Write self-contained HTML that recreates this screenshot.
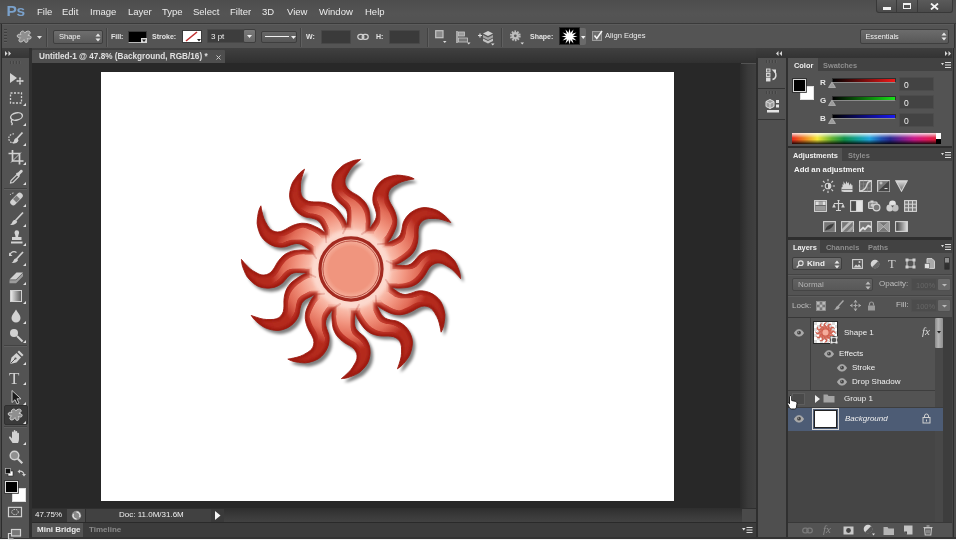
<!DOCTYPE html>
<html><head><meta charset="utf-8"><title>Ps</title>
<style>
*{box-sizing:border-box;margin:0;padding:0}
html,body{width:956px;height:540px;overflow:hidden;background:#535353;font-family:"Liberation Sans","DejaVu Sans",sans-serif;font-size:9px;color:#e6e6e6}
.a{position:absolute}
#root{position:absolute;left:0;top:0;width:956px;height:540px;overflow:hidden;background:#535353;filter:blur(.35px)}
.t{position:absolute;white-space:nowrap;line-height:1}
/* menubar */
#menubar{left:0;top:0;width:956px;height:23.500px;background:linear-gradient(#4d4d4d,#545454 60%,#525252);border-bottom:1px solid #3a3a3a}
#menubar .t{top:7px;font-size:9.500px;color:#ececec}
/* options */
#opts{left:0;top:23.500px;width:956px;height:25px;background:#545454;border-top:1px solid #5c5c5c;border-bottom:1px solid #3c3c3c}
.inp{position:absolute;background:#3a3a3a;border:1px solid #484848;border-radius:1px}
.dd{position:absolute;background:linear-gradient(#6e6e6e,#5a5a5a);border:1px solid #3e3e3e;border-radius:2px}
.sep{position:absolute;width:1px;background:#434343;border-right:1px solid #606060;box-sizing:content-box}
/* tabbar */
#tabbar{left:0;top:48px;width:956px;height:15px;background:linear-gradient(#404040,#303030)}
#doctab{left:32px;top:50px;width:193px;height:13px;background:#4e4e4e;border-radius:1px 1px 0 0}
/* canvas */
#work{left:32px;top:63px;width:709px;height:445px;background:#282828}
#paper{left:100.800px;top:71.700px;width:573.400px;height:429.700px;background:#fff;box-shadow:0 0 1px #222}
/* tools */
#tools{left:2px;top:58px;width:27px;height:480px;background:#535353}
/* right */
.panel{position:absolute;left:788px;width:164px;background:#535353}
.tabrow{position:absolute;left:788px;width:164px;height:13px;background:#424242}
.tab{position:absolute;top:0;height:13px;background:#535353}
.tabrow .t{top:3.600px;font-size:7.400px}
</style></head><body><div id="root">

<div id="menubar" class="a">
<span class="t" style="left:6.500px;top:3px;font-size:15.500px;font-weight:bold;color:#7aa1cb;letter-spacing:-.3px">Ps</span>
<span class="t" style="left:37px">File</span>
<span class="t" style="left:62px">Edit</span>
<span class="t" style="left:90px">Image</span>
<span class="t" style="left:128px">Layer</span>
<span class="t" style="left:162px">Type</span>
<span class="t" style="left:193px">Select</span>
<span class="t" style="left:230px">Filter</span>
<span class="t" style="left:262px">3D</span>
<span class="t" style="left:287px">View</span>
<span class="t" style="left:319px">Window</span>
<span class="t" style="left:365px">Help</span>
<div class="a" style="left:876px;top:0;width:77px;height:13px;background:linear-gradient(#5a5a5a,#4a4a4a);border:1px solid #383838;border-top:none;border-radius:0 0 3px 3px"></div>
<div class="a" style="left:896px;top:0;width:1px;height:12px;background:#3a3a3a"></div>
<div class="a" style="left:917px;top:0;width:1px;height:12px;background:#3a3a3a"></div>
<div class="a" style="left:883px;top:7px;width:8px;height:2.500px;background:#f2f2f2"></div>
<div class="a" style="left:903px;top:3px;width:8px;height:6px;border:1.500px solid #f2f2f2;border-top-width:2px"></div>
<svg class="a" style="left:930px;top:3px" width="9" height="7" viewBox="0 0 9 7"><path d="M1 .5l7 6M8 .5l-7 6" stroke="#f2f2f2" stroke-width="1.800"/></svg>
</div>

<div id="opts" class="a">
<div class="a" style="left:4px;top:4px;width:3px;height:15px;background:repeating-linear-gradient(#3e3e3e 0 1px,#5e5e5e 1px 2px,transparent 2px 3px)"></div>
<svg class="a" style="left:16px;top:4px" width="18" height="17" viewBox="0 0 18 17"><path d="M5.5 2.5c1.5-1 3 .2 3.400 1.300c1.200-1.600 3.600-2.200 4.800-1.100c1.300 1.300-.3 3-1.800 3.600c1.600.2 3.400.8 3.200 2.500c-.3 1.700-2.500 1.400-3.800.7c.8 1.400 1.100 3.300-.5 3.800c-1.700.5-2.600-1.300-2.800-2.700c-.9 1.500-2.600 3-4.300 2.200c-1.700-1 -.4-3 .8-4c-1.500.1-3.300-.3-3.300-1.900c.1-1.700 2.200-1.900 3.700-1.400c-.7-.9-.6-2.300.6-3z" fill="#8f8f8f" stroke="#c9c9c9" stroke-width="1"/></svg>
<svg class="a" style="left:37px;top:11px" width="6" height="4"><path d="M0 0h5l-2.500 3z" fill="#ddd"/></svg>
<div class="sep" style="left:46px;top:3px;height:19px"></div>
<div class="dd" style="left:53px;top:5px;width:50px;height:14px"><span class="t" style="left:5px;top:2.500px;font-size:7.500px;color:#f0f0f0">Shape</span>
<svg class="a" style="left:41px;top:2px" width="6" height="9"><path d="M0.500 3.500l2.500-3l2.500 3zM0.500 5.500l2.500 3l2.500-3z" fill="#e8e8e8"/></svg></div>
<div class="sep" style="left:106px;top:3px;height:19px"></div>
<span class="t" style="left:111px;top:8px;font-size:7px;font-weight:bold;color:#e4e4e4">Fill:</span>
<div class="a" style="left:128px;top:6px;width:19px;height:12px;background:#000;border:1px solid #3a3a3a;border-bottom-color:#bbb"></div>
<svg class="a" style="left:141px;top:13px" width="6" height="5"><rect width="6" height="5" fill="#d8d8d8"/><path d="M1 1.500h4l-2 2.500z" fill="#222"/></svg>
<span class="t" style="left:152px;top:8px;font-size:7px;font-weight:bold;color:#e4e4e4">Stroke:</span>
<svg class="a" style="left:182px;top:5px" width="20" height="13" viewBox="0 0 20 13"><rect x=".5" y=".5" width="19" height="12" fill="#fff" stroke="#3a3a3a"/><path d="M4 11L15 2" stroke="#c03030" stroke-width="1.600"/><path d="M15 9h4l-2 2.500z" fill="#222"/></svg>
<div class="inp" style="left:207px;top:4.500px;width:37px;height:14px;background:#3d3d3d"><span class="t" style="left:3px;top:2.500px;font-size:8px;color:#f0f0f0">3 pt</span></div>
<div class="dd" style="left:243px;top:4.500px;width:13px;height:14px;background:linear-gradient(#7a7a7a,#666)"><svg class="a" style="left:3px;top:5px" width="6" height="4"><path d="M0 0h5l-2.500 3z" fill="#eee"/></svg></div>
<div class="dd" style="left:261px;top:6px;width:36px;height:12px;background:linear-gradient(#686868,#565656)"><div class="a" style="left:3px;top:4px;width:24px;height:1.500px;background:#f2f2f2"></div><svg class="a" style="left:29px;top:4px" width="5" height="4"><path d="M0 0h5l-2.500 3z" fill="#eee"/></svg></div>
<div class="sep" style="left:300px;top:3px;height:19px"></div>
<span class="t" style="left:306px;top:8px;font-size:7px;font-weight:bold;color:#e4e4e4">W:</span>
<div class="inp" style="left:321px;top:5px;width:30px;height:14px"></div>
<svg class="a" style="left:357px;top:8px" width="12" height="8" viewBox="0 0 12 8"><rect x=".8" y="1.300" width="6" height="5" rx="2.500" fill="none" stroke="#cfcfcf" stroke-width="1.300"/><rect x="5.200" y="1.300" width="6" height="5" rx="2.500" fill="none" stroke="#cfcfcf" stroke-width="1.300"/></svg>
<span class="t" style="left:376px;top:8px;font-size:7px;font-weight:bold;color:#e4e4e4">H:</span>
<div class="inp" style="left:389px;top:5px;width:31px;height:14px"></div>
<div class="sep" style="left:427px;top:3px;height:19px"></div>
<svg class="a" style="left:434.500px;top:5.500px" width="12" height="14" viewBox="0 0 12 14"><rect x=".7" y=".7" width="7.300" height="7" fill="#8a8a8a" stroke="#c4c4c4" stroke-width="1.200"/><path d="M8 11h3.500l-1.750 2z" fill="#ddd"/></svg>
<svg class="a" style="left:456px;top:6px" width="15" height="14" viewBox="0 0 15 14"><path d="M1 0v12" stroke="#ccc" stroke-width="1.400"/><rect x="2.500" y="1" width="6" height="4" fill="#9a9a9a" stroke="#c8c8c8" stroke-width=".8"/><rect x="2.500" y="7" width="9" height="4" fill="#777" stroke="#c8c8c8" stroke-width=".8"/><path d="M11 11.500h3.500l-1.750 2z" fill="#ddd"/></svg>
<svg class="a" style="left:477px;top:5px" width="18" height="16" viewBox="0 0 18 16"><path d="M1 5.500h4M3 3.500v4" stroke="#ddd" stroke-width="1.200"/><path d="M11 1l5 2.500l-5 2.500l-5-2.500z" fill="#d0d0d0"/><path d="M6 5l5 2.500l5-2.500v2.500l-5 2.500l-5-2.500z" fill="#a4a4a4"/><path d="M6 8.500l5 2.500l5-2.500v2.500l-5 2.500l-5-2.500z" fill="#c0c0c0"/><path d="M14 13.500h3.500l-1.750 2z" fill="#ddd"/></svg>
<div class="sep" style="left:501px;top:3px;height:19px"></div>
<svg class="a" style="left:509px;top:4.200px" width="16" height="17" viewBox="0 0 16 17"><circle cx="6.300" cy="6.800" r="4.300" fill="none" stroke="#bdbdbd" stroke-width="2.200" stroke-dasharray="1.600 1.100"/><circle cx="6.300" cy="6.800" r="3.700" fill="#bdbdbd"/><circle cx="6.300" cy="6.800" r="1.400" fill="#5a5a5a"/><path d="M11.500 13.500h3.500l-1.750 2z" fill="#ddd"/></svg>
<span class="t" style="left:530px;top:8px;font-size:7px;font-weight:bold;color:#e4e4e4">Shape:</span>
<div class="a" style="left:559px;top:2.500px;width:21px;height:18px;background:#000;border:1px solid #2a2a2a"></div>
<svg class="a" style="left:561px;top:3.500px" width="17" height="17" viewBox="-8.500 -8.500 17 17"><g fill="#fff"><circle r="3.600"/><g id="sr"><path d="M-1.100 -3L0 -8L1.100 -3z"/><path d="M-1.100 -3L0 -8L1.100 -3z" transform="rotate(30)"/><path d="M-1.100 -3L0 -8L1.100 -3z" transform="rotate(60)"/></g><use href="#sr" transform="rotate(90)"/><use href="#sr" transform="rotate(180)"/><use href="#sr" transform="rotate(270)"/></g></svg>
<div class="a" style="left:580px;top:3.500px;width:6px;height:17px;background:#6a6a6a;border-radius:0 2px 2px 0"></div>
<svg class="a" style="left:581px;top:11px" width="5" height="4"><path d="M0 0h4.500l-2.250 3z" fill="#f0f0f0"/></svg>
<div class="a" style="left:592px;top:6px;width:10px;height:10px;background:#6e6e6e;border:1px solid #9a9a9a"></div>
<svg class="a" style="left:592px;top:4px" width="12" height="12" viewBox="0 0 12 12"><path d="M2.500 6.500l2.300 3L10 2" fill="none" stroke="#f4f4f4" stroke-width="1.500"/></svg>
<span class="t" style="left:605px;top:7.500px;font-size:7.600px;color:#ececec">Align Edges</span>
<div class="dd" style="left:860px;top:4.500px;width:89px;height:14.500px;background:linear-gradient(#6c6c6c,#585858)"><span class="t" style="left:4.500px;top:3px;font-size:7.300px;color:#f0f0f0">Essentials</span>
<svg class="a" style="left:80px;top:2px" width="6" height="9"><path d="M0.500 3.500l2.500-3l2.500 3zM0.500 5.500l2.500 3l2.500-3z" fill="#e8e8e8"/></svg></div>
</div>
<div id="tabbar" class="a"></div>
<div id="doctab" class="a"><span class="t" style="left:7px;top:2.500px;font-size:8.200px;font-weight:bold;color:#e0e0e0">Untitled-1 @ 47.8% (Background, RGB/16) *</span><svg class="a" style="left:183.500px;top:4.500px" width="5" height="5"><path d="M.5 .5l4 4M4.500 .5l-4 4" stroke="#c8c8c8" stroke-width="1"/></svg></div>
<div id="work" class="a"></div>
<div id="paper" class="a"></div>
<svg class="a" id="sun" style="left:221.10000000000002px;top:139.2px" width="260" height="260" viewBox="-129.500 -129.500 259 259">
<defs><path id="ry" d="M-4.3 -43.5C-4.2 -44.3 -3.9 -46.5 -3.7 -48.3C-3.6 -50.2 -3.3 -52.7 -3.5 -54.6C-3.7 -56.4 -4.1 -57.9 -4.9 -59.4C-5.8 -61.0 -7.4 -62.3 -8.8 -63.7C-10.3 -65.2 -12.3 -66.3 -13.7 -67.9C-15.0 -69.5 -16.2 -71.3 -17.1 -73.4C-18.0 -75.4 -18.7 -77.9 -18.9 -80.2C-19.2 -82.5 -19.1 -84.9 -18.7 -87.1C-18.4 -89.4 -17.6 -91.7 -16.6 -93.6C-15.6 -95.6 -14.1 -97.3 -12.6 -99.0C-11.1 -100.6 -9.2 -102.4 -7.4 -103.7C-5.5 -104.9 -3.2 -105.8 -1.3 -106.6C0.7 -107.4 2.4 -108.1 4.2 -108.5C6.0 -109.0 8.7 -109.1 9.6 -109.2C8.9 -108.6 6.8 -106.9 5.2 -105.4C3.7 -104.0 1.7 -102.3 0.3 -100.5C-1.1 -98.8 -2.3 -96.9 -3.3 -95.0C-4.4 -93.1 -5.5 -91.1 -5.8 -89.3C-6.2 -87.5 -6.1 -85.7 -5.6 -84.1C-5.1 -82.5 -4.2 -80.9 -3.0 -79.6C-1.8 -78.3 -0.1 -77.3 1.4 -76.3C3.0 -75.3 4.8 -74.5 6.3 -73.5C7.8 -72.5 9.2 -71.4 10.7 -70.1C12.1 -68.7 13.8 -67.1 14.9 -65.3C16.1 -63.4 17.1 -61.2 17.8 -59.0C18.4 -56.8 18.6 -54.2 18.8 -52.0C19.0 -49.7 19.1 -47.5 19.0 -45.5C18.9 -43.5 18.2 -40.8 18.0 -39.8"/>
<path id="rl" d="M-4.300 -43.500Q-5.500 -40 -8 -35.500"/><g id="rays"><use href="#ry" transform="rotate(0)"/><use href="#ry" transform="rotate(30)"/><use href="#ry" transform="rotate(60)"/><use href="#ry" transform="rotate(90)"/><use href="#ry" transform="rotate(120)"/><use href="#ry" transform="rotate(150)"/><use href="#ry" transform="rotate(180)"/><use href="#ry" transform="rotate(210)"/><use href="#ry" transform="rotate(240)"/><use href="#ry" transform="rotate(270)"/><use href="#ry" transform="rotate(300)"/><use href="#ry" transform="rotate(330)"/><circle r="43.500"/></g>
<radialGradient id="sg" gradientUnits="userSpaceOnUse" cx="0" cy="0" r="112"><stop offset="0.32" stop-color="#f6b8a8"/><stop offset="0.40" stop-color="#e27c6a"/><stop offset="0.48" stop-color="#cf4e3e"/><stop offset="0.60" stop-color="#c0372a"/><stop offset="0.72" stop-color="#b62b1f"/><stop offset="1" stop-color="#b0271b"/></radialGradient><radialGradient id="sg2" gradientUnits="userSpaceOnUse" cx="0" cy="0" r="112"><stop offset="0.30" stop-color="#fde0d6"/><stop offset="0.40" stop-color="#f9bfae"/><stop offset="0.52" stop-color="#f29580"/><stop offset="0.64" stop-color="#e87660" stop-opacity=".85"/><stop offset="0.76" stop-color="#e06a56" stop-opacity="0"/></radialGradient>
<radialGradient id="dg" gradientUnits="userSpaceOnUse" cx="0" cy="0" r="28"><stop offset=".8" stop-color="#f0957e"/><stop offset="1" stop-color="#f5ae9a"/></radialGradient><filter id="fb"><feGaussianBlur stdDeviation=".7"/></filter><filter id="fds" x="-20%" y="-20%" width="140%" height="140%"><feGaussianBlur stdDeviation="1.500"/></filter>
<filter id="fin" x="-5%" y="-5%" width="110%" height="110%"><feMorphology operator="erode" radius="2.200"/><feGaussianBlur stdDeviation="1.300"/></filter>
<filter id="fin2" x="-5%" y="-5%" width="110%" height="110%"><feMorphology operator="erode" radius="3.800"/><feGaussianBlur stdDeviation=".7"/></filter>
</defs>
<use href="#rays" transform="translate(3 3.500)" fill="#000" opacity=".5" filter="url(#fds)"/>
<use href="#rays" fill="#a01c12" stroke="#9a1a10" stroke-width=".8"/>
<use href="#rays" fill="url(#sg)" filter="url(#fin)"/>
<use href="#rays" fill="url(#sg2)" filter="url(#fin2)"/>
<g fill="none" stroke="#b8382a" stroke-width="1.800" stroke-linecap="round" opacity=".4" filter="url(#fb)"><use href="#rl" transform="rotate(0)"/><use href="#rl" transform="rotate(30)"/><use href="#rl" transform="rotate(60)"/><use href="#rl" transform="rotate(90)"/><use href="#rl" transform="rotate(120)"/><use href="#rl" transform="rotate(150)"/><use href="#rl" transform="rotate(180)"/><use href="#rl" transform="rotate(210)"/><use href="#rl" transform="rotate(240)"/><use href="#rl" transform="rotate(270)"/><use href="#rl" transform="rotate(300)"/><use href="#rl" transform="rotate(330)"/></g>
<circle r="36.500" fill="none" stroke="#fff0ea" stroke-width="6" opacity=".4" filter="url(#fds)"/>
<circle r="30.900" fill="#f4b4a2" stroke="#a32a20" stroke-width="3.200"/>
<circle r="28" fill="url(#dg)" stroke="#b4463a" stroke-width=".9"/>
</svg>

<!-- left edge & separators -->
<div class="a" style="left:0;top:24px;width:2px;height:516px;background:linear-gradient(90deg,#4a4a4a 0 .8px,#2c2c2c .8px)"></div>
<div class="a" style="left:29px;top:48px;width:3px;height:492px;background:#303030"></div>
<svg class="a" style="left:5px;top:51px" width="8" height="5"><path d="M0 0l2.500 2.500l-2.500 2.500zM3.500 0l2.500 2.500l-2.500 2.500z" fill="#d8d8d8"/></svg>
<!-- v scrollbar -->
<div class="a" style="left:740px;top:63.500px;width:16px;height:444px;background:linear-gradient(90deg,#2b2b2b,#3a3a3a 50%,#404040)"></div>
<!-- status bar -->
<div class="a" style="left:32px;top:507.500px;width:724px;height:14.500px;background:linear-gradient(#2e2e2e,#353535 30%,#424242)"></div>
<div class="a" style="left:32px;top:509px;width:192px;height:13px;background:#414141"></div>
<div class="a" style="left:32px;top:509px;width:35px;height:13px;background:#363636"></div><div class="a" style="left:67px;top:509px;width:18px;height:13px;background:#4a4a4a"></div>
<span class="t" style="left:35px;top:511px;font-size:8px;color:#f0f0f0">47.75%</span>
<svg class="a" style="left:71px;top:510px" width="11" height="11" viewBox="0 0 11 11"><circle cx="5.500" cy="5.500" r="4.700" fill="#8a8a8a"/><path d="M5.500 2a3.500 3.500 0 0 1 3 5.200M5.500 9a3.500 3.500 0 0 1-3-5.200" fill="none" stroke="#e2e2e2" stroke-width="1.300"/></svg>
<div class="a" style="left:85px;top:509px;width:1px;height:13px;background:#2f2f2f"></div>
<span class="t" style="left:119px;top:511px;font-size:8px;color:#f0f0f0">Doc: 11.0M/31.6M</span>
<div class="a" style="left:211px;top:509px;width:13px;height:13px;background:#3a3a3a"></div>
<svg class="a" style="left:215px;top:511px" width="6" height="9"><path d="M0 0l5.500 4.500l-5.500 4.500z" fill="#f4f4f4"/></svg>
<div class="a" style="left:742px;top:509px;width:14px;height:13px;background:#4a4a4a"></div>
<!-- mini bridge -->
<div class="a" style="left:32px;top:522px;width:724px;height:15px;background:#3c3c3c;border-top:1px solid #2a2a2a"></div>
<div class="a" style="left:32px;top:523px;width:51px;height:14px;background:#535353"></div>
<span class="t" style="left:37px;top:525.500px;font-size:8px;font-weight:bold;color:#ececec">Mini Bridge</span>
<span class="t" style="left:89px;top:525.500px;font-size:8px;font-weight:bold;color:#8a8a8a">Timeline</span>
<svg class="a" style="left:742px;top:526px" width="11" height="8" viewBox="0 0 11 8"><path d="M0 2h3.500l-1.750 2.500z" fill="#ddd"/><path d="M4.500 1.500h6M4.500 4h6M4.500 6.500h6" stroke="#ddd" stroke-width="1.200"/></svg>
<!-- dock header -->
<div class="a" style="left:756px;top:48px;width:200px;height:10px;background:linear-gradient(#3e3e3e,#333)"></div>
<div class="a" style="left:756px;top:58px;width:2px;height:480px;background:#2e2e2e"></div>
<div class="a" style="left:785px;top:58px;width:3px;height:480px;background:#303030"></div>
<div class="a" style="left:952px;top:48px;width:4px;height:490px;background:linear-gradient(90deg,#444 0 1px,#2c2c2c 1px 2.500px,#4c4c4c 2.500px)"></div><div class="a" style="left:953.500px;top:24px;width:2.500px;height:24px;background:linear-gradient(90deg,#333 0 1px,#4c4c4c 1px)"></div>
<svg class="a" style="left:776px;top:51px" width="8" height="5"><path d="M2.500 0l-2.500 2.500l2.500 2.500zM6 0l-2.500 2.500l2.500 2.500z" fill="#d8d8d8"/></svg>
<svg class="a" style="left:945px;top:51px" width="8" height="5"><path d="M0 0l2.500 2.500l-2.500 2.500zM3.500 0l2.500 2.500l-2.500 2.500z" fill="#d8d8d8"/></svg>
<!-- icon column -->
<div class="a" style="left:758px;top:58px;width:27.500px;height:479px;background:#4f4f4f"></div><div class="a" style="left:758px;top:58px;width:27.500px;height:61px;background:#525252"></div>
<div class="a" style="left:758px;top:88px;width:27px;height:1px;background:#333"></div>
<div class="a" style="left:758px;top:119px;width:27px;height:1px;background:#333"></div>
<div class="a" style="left:766px;top:60px;width:11px;height:3px;background:repeating-linear-gradient(90deg,#444 0 1px,#5a5a5a 1px 2px,transparent 2px 3px)"></div>
<div class="a" style="left:766px;top:91px;width:11px;height:3px;background:repeating-linear-gradient(90deg,#444 0 1px,#5a5a5a 1px 2px,transparent 2px 3px)"></div>
<svg class="a" style="left:765px;top:67px" width="16" height="16" viewBox="0 0 16 16"><rect x="1.500" y="2" width="3.500" height="3" fill="#777" stroke="#ddd" stroke-width=".9"/><rect x="1.500" y="6.500" width="3.500" height="3" fill="#777" stroke="#ddd" stroke-width=".9"/><rect x="1.500" y="11" width="3.500" height="3" fill="#ddd" stroke="#ddd" stroke-width=".9"/><path d="M7.500 12.500c4-1 4.500-6 1.500-8.500" fill="none" stroke="#ddd" stroke-width="1.500"/><path d="M6.500 2.500h4.500v4z" fill="#ddd"/></svg>
<svg class="a" style="left:765px;top:98px" width="16" height="16" viewBox="0 0 16 16"><path d="M5 1.500l4 2v5l-4 2l-4-2v-5z" fill="#999" stroke="#e0e0e0" stroke-width="1"/><path d="M1 3.500l4 2l4-2M5 5.500v5" fill="none" stroke="#e0e0e0" stroke-width=".9"/><rect x="11" y="2" width="3" height="3" fill="#e4e4e4"/><rect x="11" y="6.500" width="3" height="3" fill="#e4e4e4"/><rect x="2" y="12" width="12" height="2.500" fill="#e4e4e4"/></svg>

<!-- COLOR PANEL -->
<div class="tabrow" style="top:58px"><div class="tab" style="left:0;width:30px"></div><span class="t" style="left:6px;font-weight:bold;color:#f0f0f0">Color</span><span class="t" style="left:35px;font-weight:bold;color:#8e8e8e">Swatches</span><svg class="a" style="left:153px;top:3px" width="10" height="8" viewBox="0 0 10 8"><path d="M0 2h3l-1.500 2.200z" fill="#ddd"/><path d="M4 1.500h6M4 4h6M4 6.500h6" stroke="#ddd" stroke-width="1.200"/></svg></div>
<div class="panel" style="top:71px;height:75px"></div>
<div class="a" style="left:800px;top:86px;width:14px;height:14px;background:#fff;border:1px solid #e0e0e0"></div>
<div class="a" style="left:792.500px;top:78.500px;width:13.500px;height:13.500px;background:#000;border:1px solid #d8d8d8;box-shadow:0 0 0 .8px #2a2a2a"></div>
<span class="t" style="left:820px;top:79px;font-size:8px;font-weight:bold;color:#e6e6e6">R</span>
<div class="a" style="left:832px;top:78px;width:64px;height:5px;background:linear-gradient(90deg,#000,#f01818);border:1px solid #2e2e2e;border-bottom-color:#8a8a8a"></div>
<svg class="a" style="left:828px;top:82px" width="8" height="6"><path d="M4 0l3.500 5.500h-7z" fill="#9c9c9c" stroke="#c8c8c8" stroke-width=".6"/></svg>
<div class="inp" style="left:899px;top:77px;width:35px;height:14px;background:#434343;border-color:#4c4c4c"><span class="t" style="left:4px;top:2.500px;font-size:8.500px;color:#f2f2f2">0</span></div>
<span class="t" style="left:820px;top:97px;font-size:8px;font-weight:bold;color:#e6e6e6">G</span>
<div class="a" style="left:832px;top:96px;width:64px;height:5px;background:linear-gradient(90deg,#000,#18e018);border:1px solid #2e2e2e;border-bottom-color:#8a8a8a"></div>
<svg class="a" style="left:828px;top:100px" width="8" height="6"><path d="M4 0l3.500 5.500h-7z" fill="#9c9c9c" stroke="#c8c8c8" stroke-width=".6"/></svg>
<div class="inp" style="left:899px;top:95px;width:35px;height:14px;background:#434343;border-color:#4c4c4c"><span class="t" style="left:4px;top:2.500px;font-size:8.500px;color:#f2f2f2">0</span></div>
<span class="t" style="left:820px;top:115px;font-size:8px;font-weight:bold;color:#e6e6e6">B</span>
<div class="a" style="left:832px;top:114px;width:64px;height:5px;background:linear-gradient(90deg,#000,#1818f0);border:1px solid #2e2e2e;border-bottom-color:#8a8a8a"></div>
<svg class="a" style="left:828px;top:118px" width="8" height="6"><path d="M4 0l3.500 5.500h-7z" fill="#9c9c9c" stroke="#c8c8c8" stroke-width=".6"/></svg>
<div class="inp" style="left:899px;top:113px;width:35px;height:14px;background:#434343;border-color:#4c4c4c"><span class="t" style="left:4px;top:2.500px;font-size:8.500px;color:#f2f2f2">0</span></div>
<div class="a" style="left:792px;top:133px;width:149px;height:11px;background:linear-gradient(90deg,#e8281c 0%,#f08020 8%,#f4e838 17%,#60b030 27%,#109048 35%,#10a0a0 45%,#20a4dc 52%,#2050b0 60%,#282890 66%,#702090 73%,#c81888 82%,#e01860 90%,#e02028 100%)"></div>
<div class="a" style="left:792px;top:133px;width:149px;height:11px;background:linear-gradient(rgba(255,255,255,.85) 0%,rgba(255,255,255,0) 45%,rgba(0,0,0,0) 60%,rgba(0,0,0,.85) 100%)"></div>
<div class="a" style="left:936px;top:133px;width:5px;height:6px;background:#fff"></div>
<div class="a" style="left:936px;top:139px;width:5px;height:5px;background:#000"></div>
<div class="a" style="left:788px;top:146px;width:164px;height:2px;background:#2e2e2e"></div>

<!-- ADJUSTMENTS -->
<div class="tabrow" style="top:148px"><div class="tab" style="left:0;width:54px"></div><span class="t" style="left:5px;font-weight:bold;color:#f0f0f0">Adjustments</span><span class="t" style="left:60px;font-weight:bold;color:#8e8e8e">Styles</span><svg class="a" style="left:153px;top:3px" width="10" height="8" viewBox="0 0 10 8"><path d="M0 2h3l-1.500 2.200z" fill="#ddd"/><path d="M4 1.500h6M4 4h6M4 6.500h6" stroke="#ddd" stroke-width="1.200"/></svg></div>
<div class="panel" style="top:161px;height:76px"></div>
<span class="t" style="left:794px;top:166px;font-size:7.800px;font-weight:bold;color:#f4f4f4">Add an adjustment</span>
<svg class="a" style="left:821.0px;top:178.5px" width="14" height="14" viewBox="0 0 14 14"><circle cx="7" cy="7" r="2.800" fill="none" stroke="#d4d4d4" stroke-width="1.100"/><path d="M7 4.200a2.800 2.800 0 0 1 0 5.600z" fill="#d4d4d4"/><g stroke="#d4d4d4" stroke-width="1.100"><path d="M7 0v2.200M7 11.800v2.200M0 7h2.200M11.800 7h2.200M2 2l1.600 1.600M10.400 10.400l1.600 1.600M2 12l1.600-1.600M10.400 3.600l1.600-1.600"/></g></svg><svg class="a" style="left:840.5px;top:180.0px" width="13" height="12" viewBox="0 0 13 12"><path d="M.5 11.500v-4l1-.5v-3l1 1v-4l1 3v-2l1 2.500l1-3.500l1 2.500l1-1.500l1 3.500l1-2.500l1 3v-2l1 1.500v8z" fill="#d4d4d4"/><path d="M.5 9.500h12" stroke="#666" stroke-width=".8"/></svg><svg class="a" style="left:858.5px;top:180.0px" width="13" height="12" viewBox="0 0 13 12"><rect x=".6" y=".6" width="11.800" height="10.800" fill="#666" stroke="#d4d4d4" stroke-width="1.100"/><path d="M4.500 .6v10.800M8.500 .6v10.800M.6 4h11.800M.6 8h11.800" stroke="#8a8a8a" stroke-width=".6"/><path d="M1 11c4-.5 6-3 7-6.500c.6-2 2-3.300 4-3.500" fill="none" stroke="#d4d4d4" stroke-width="1.300"/></svg><svg class="a" style="left:876.5px;top:180.0px" width="13" height="12" viewBox="0 0 13 12"><rect x=".6" y=".6" width="11.800" height="10.800" fill="#777" stroke="#d4d4d4" stroke-width="1.100"/><path d="M.6 11.400l11.800-10.800v10.800z" fill="#444"/><path d="M2.500 3h3M4 1.500v3M7.500 8.500h3" stroke="#d4d4d4" stroke-width="1"/></svg><svg class="a" style="left:894.5px;top:179.5px" width="13" height="12" viewBox="0 0 13 12"><defs><linearGradient id="gv" x2="0" y2="1"><stop offset="0" stop-color="#ddd"/><stop offset="1" stop-color="#666"/></linearGradient></defs><path d="M.8 .8h11.400l-5.700 10.400z" fill="url(#gv)" stroke="#d4d4d4" stroke-width="1.100"/></svg><svg class="a" style="left:813.5px;top:199.5px" width="13" height="12" viewBox="0 0 13 12"><rect x=".6" y=".6" width="11.800" height="10.800" fill="#666" stroke="#d4d4d4" stroke-width="1.100"/><rect x="1.500" y="1.500" width="3.300" height="3.500" fill="#e0e0e0"/><rect x="5" y="1.500" width="3.300" height="3.500" fill="#aaa"/><rect x="8.500" y="1.500" width="3" height="3.500" fill="#e0e0e0"/><rect x="1.500" y="6" width="10" height="4.500" fill="#999"/></svg><svg class="a" style="left:831.5px;top:199.5px" width="13" height="12" viewBox="0 0 13 12"><path d="M6.500 1v9M2 3.500h9M4 10.500h5" stroke="#d4d4d4" stroke-width="1.200"/><path d="M2 3.500l-1.800 4h3.600zM11 3.500l-1.800 4h3.600z" fill="#d4d4d4"/><path d="M5 0h3l-1.500 1.500z" fill="#d4d4d4"/></svg><svg class="a" style="left:849.5px;top:199.5px" width="13" height="12" viewBox="0 0 13 12"><rect x=".6" y=".6" width="11.800" height="10.800" fill="#e4e4e4" stroke="#d4d4d4" stroke-width="1.100"/><rect x=".6" y=".6" width="5.900" height="10.800" fill="#4a4a4a" stroke="#d4d4d4" stroke-width="1.100"/></svg><svg class="a" style="left:867.5px;top:199.5px" width="13" height="12" viewBox="0 0 13 12"><rect x=".6" y="2" width="8.500" height="6.500" rx="1" fill="#8a8a8a" stroke="#d4d4d4" stroke-width="1.100"/><rect x="2.500" y=".5" width="3" height="2" fill="#d4d4d4"/><circle cx="8.500" cy="7.500" r="3.400" fill="#777" stroke="#d4d4d4" stroke-width="1.200"/><circle cx="4.500" cy="5.200" r="1.600" fill="#ccc"/></svg><svg class="a" style="left:885.5px;top:199.5px" width="13" height="12" viewBox="0 0 13 12"><circle cx="6.500" cy="4" r="3.400" fill="#e2e2e2"/><circle cx="3.800" cy="8" r="3.400" fill="#cfcfcf"/><circle cx="9.200" cy="8" r="3.400" fill="#bdbdbd"/><path d="M6.500 7.500l-1.500-2h3z" fill="#555"/></svg><svg class="a" style="left:903.5px;top:199.5px" width="13" height="12" viewBox="0 0 13 12"><rect x=".6" y=".6" width="11.800" height="10.800" fill="#777" stroke="#d4d4d4" stroke-width="1.100"/><path d="M4.500 .6v10.800M8.500 .6v10.800M.6 4.200h11.800M.6 7.800h11.800" stroke="#d4d4d4" stroke-width="1"/></svg><svg class="a" style="left:822.5px;top:220.5px" width="13" height="11" viewBox="0 0 13 11"><rect x=".6" y=".6" width="11.800" height="10.800" fill="#777" stroke="#d4d4d4" stroke-width="1.100"/><path d="M2 9.500c2-6 6-6 9-7c-2 6-6 6-9 7z" fill="#3e3e3e"/></svg><svg class="a" style="left:840.5px;top:220.5px" width="13" height="11" viewBox="0 0 13 11"><rect x=".6" y=".6" width="11.800" height="10.800" fill="#777" stroke="#d4d4d4" stroke-width="1.100"/><path d="M1 8l7-7h3.500l-10.500 10.500z" fill="#bdbdbd"/><path d="M5 11.400l7.400-7.400v3.500l-4 4z" fill="#a0a0a0"/></svg><svg class="a" style="left:858.5px;top:220.5px" width="13" height="11" viewBox="0 0 13 11"><rect x=".6" y=".6" width="11.800" height="10.800" fill="#777" stroke="#d4d4d4" stroke-width="1.100"/><path d="M1 8.500l3-3l2 1.500l3-3.500l3 1.500v2l-3-1l-3 3.500l-2-1.500l-3 3z" fill="#e0e0e0"/></svg><svg class="a" style="left:876.5px;top:220.5px" width="13" height="11" viewBox="0 0 13 11"><rect x=".6" y=".6" width="11.800" height="10.800" fill="#777" stroke="#d4d4d4" stroke-width="1.100"/><path d="M.6 .6l11.800 10.200M12.400 .6l-11.800 10.200" stroke="#d4d4d4" stroke-width=".9"/><path d="M.6 .6l5.900 5.100l-5.900 5.100zM12.400 .6l-5.900 5.100l5.900 5.100z" fill="#9a9a9a"/></svg><svg class="a" style="left:894.5px;top:220.5px" width="13" height="11" viewBox="0 0 13 11"><defs><linearGradient id="gh"><stop offset="0" stop-color="#3a3a3a"/><stop offset="1" stop-color="#e0e0e0"/></linearGradient></defs><rect x=".6" y=".6" width="11.800" height="9.800" fill="url(#gh)" stroke="#d4d4d4" stroke-width="1.100"/></svg>
<div class="a" style="left:788px;top:237px;width:164px;height:3px;background:#2e2e2e"></div>
<!-- LAYERS -->
<div class="tabrow" style="top:240px"><div class="tab" style="left:0;width:32px"></div><span class="t" style="left:5px;font-weight:bold;color:#f0f0f0">Layers</span><span class="t" style="left:38px;font-weight:bold;color:#8e8e8e">Channels</span><span class="t" style="left:80px;font-weight:bold;color:#8e8e8e">Paths</span><svg class="a" style="left:153px;top:3px" width="10" height="8" viewBox="0 0 10 8"><path d="M0 2h3l-1.500 2.200z" fill="#ddd"/><path d="M4 1.500h6M4 4h6M4 6.500h6" stroke="#ddd" stroke-width="1.200"/></svg></div>
<div class="panel" style="top:253px;height:64px"></div>
<div class="dd" style="left:792px;top:257px;width:50px;height:13px;background:linear-gradient(#6e6e6e,#5c5c5c)"><svg class="a" style="left:3px;top:2px" width="8" height="8" viewBox="0 0 8 8"><circle cx="4.800" cy="3.200" r="2.300" fill="none" stroke="#e0e0e0" stroke-width="1.100"/><path d="M3.200 4.800l-2.500 2.700" stroke="#e0e0e0" stroke-width="1.200"/></svg><span class="t" style="left:14px;top:2px;font-size:8px;font-weight:bold;color:#f0f0f0">Kind</span><svg class="a" style="left:41px;top:1.500px" width="6" height="9"><path d="M0.500 3.500l2.500-3l2.500 3zM0.500 5.500l2.500 3l2.500-3z" fill="#e8e8e8"/></svg></div>
<svg class="a" style="left:851.5px;top:258.5px" width="11" height="10" viewBox="0 0 11 10"><rect x=".6" y=".6" width="9.800" height="8.800" fill="#555" stroke="#d0d0d0" stroke-width="1.100"/><path d="M1.500 8.500l2.500-3l1.500 1.500l1.500-2l2.500 3.500z" fill="#d0d0d0"/><circle cx="7.500" cy="3" r="1" fill="#d0d0d0"/></svg>
<svg class="a" style="left:869.5px;top:258.5px" width="10" height="10" viewBox="0 0 10 10"><circle cx="5" cy="5" r="4.300" fill="#d6d6d6"/><path d="M2 8.200a4.300 4.300 0 0 0 6.200-6.200z" fill="#666"/></svg>
<span class="t" style="left:888px;top:257.500px;font-family:'Liberation Serif',serif;font-size:12.500px;color:#d0d0d0">T</span>
<svg class="a" style="left:905.0px;top:258.0px" width="11" height="11" viewBox="0 0 11 11"><rect x="2" y="2" width="7" height="7" fill="none" stroke="#d0d0d0" stroke-width="1.100"/><g fill="#d0d0d0"><rect x=".5" y=".5" width="3" height="3"/><rect x="7.500" y=".5" width="3" height="3"/><rect x=".5" y="7.500" width="3" height="3"/><rect x="7.500" y="7.500" width="3" height="3"/></g></svg>
<svg class="a" style="left:923.5px;top:258.0px" width="11" height="11" viewBox="0 0 11 11"><path d="M3 .6h5l2.500 2.500v7.300h-7.500z" fill="#aaa" stroke="#d0d0d0" stroke-width="1"/><rect x=".5" y="5.500" width="5" height="5" fill="#e0e0e0" stroke="#555" stroke-width=".6"/></svg>
<div class="a" style="left:944px;top:257px;width:6px;height:13px;background:linear-gradient(#8e8e8e 0,#8e8e8e 40%,#333 42%,#2c2c2c);border-radius:1px;border:1px solid #3a3a3a"></div>
<div class="a" style="left:788px;top:274px;width:164px;height:1px;background:#444;border-bottom:1px solid #5c5c5c;box-sizing:content-box"></div>
<div class="dd" style="left:792px;top:278px;width:81px;height:13px;background:linear-gradient(#626262,#585858);border-color:#454545"><span class="t" style="left:5px;top:2px;font-size:8px;color:#b4b4b4">Normal</span><svg class="a" style="left:72px;top:1.500px" width="6" height="9"><path d="M0.500 3.500l2.500-3l2.500 3zM0.500 5.500l2.500 3l2.500-3z" fill="#bdbdbd"/></svg></div>
<span class="t" style="left:879px;top:280px;font-size:8px;color:#bdbdbd">Opacity:</span>
<div class="inp" style="left:911px;top:278px;width:26px;height:13px;background:#4c4c4c;border-color:#505050"><span class="t" style="left:4px;top:2.500px;font-size:7.500px;color:#666">100%</span></div>
<div class="dd" style="left:937px;top:278px;width:14px;height:13px;background:#6a6a6a;border-color:#505050"><svg class="a" style="left:4px;top:5px" width="5" height="3"><path d="M0 0h5l-2.500 2.500z" fill="#bbb"/></svg></div>
<div class="a" style="left:788px;top:295px;width:164px;height:1px;background:#444;border-bottom:1px solid #5c5c5c;box-sizing:content-box"></div>
<span class="t" style="left:792px;top:301.500px;font-size:8px;color:#bdbdbd">Lock:</span>
<svg class="a" style="left:816.0px;top:300.5px" width="10" height="10" viewBox="0 0 10 10"><rect x=".5" y=".5" width="9" height="9" fill="#777" stroke="#9a9a9a" stroke-width=".8"/><g fill="#b8b8b8"><rect x="1" y="1" width="2.700" height="2.700"/><rect x="6.300" y="1" width="2.700" height="2.700"/><rect x="3.650" y="3.650" width="2.700" height="2.700"/><rect x="1" y="6.300" width="2.700" height="2.700"/><rect x="6.300" y="6.300" width="2.700" height="2.700"/></g></svg>
<svg class="a" style="left:833.0px;top:300.0px" width="11" height="11" viewBox="0 0 11 11"><path d="M10.500 .5l-5.500 6" stroke="#a8a8a8" stroke-width="1.500"/><path d="M5.500 6l1.300 1.300c-.8 2-3.300 2.800-5.800 2.400c1.100-.6 1.500-1.400 1.900-2.300c.4-1 1.300-1.600 2.600-1.400z" fill="#a8a8a8"/></svg>
<svg class="a" style="left:849.5px;top:300.0px" width="11" height="11" viewBox="0 0 11 11"><path d="M5.500 0v11M0 5.500h11" stroke="#a8a8a8" stroke-width="1.200" stroke-dasharray="2 1.500 4 1.500 2"/><path d="M5.500 0l-2 2.500h4zM5.500 11l-2-2.500h4zM0 5.500l2.500-2v4zM11 5.500l-2.500-2v4z" fill="#a8a8a8"/></svg>
<svg class="a" style="left:867.0px;top:300.5px" width="9" height="10" viewBox="0 0 9 10"><rect x="1" y="4.500" width="7" height="5" fill="#9a9a9a"/><path d="M2.500 4.500v-1.500a2 2 0 0 1 4 0v1.500" fill="none" stroke="#9a9a9a" stroke-width="1.200"/></svg>
<span class="t" style="left:896px;top:301px;font-size:8px;color:#c4c4c4">Fill:</span>
<div class="inp" style="left:911px;top:299px;width:26px;height:13px;background:#4c4c4c;border-color:#505050"><span class="t" style="left:4px;top:2.500px;font-size:7.500px;color:#666">100%</span></div>
<div class="dd" style="left:937px;top:299px;width:14px;height:13px;background:#6a6a6a;border-color:#505050"><svg class="a" style="left:4px;top:5px" width="5" height="3"><path d="M0 0h5l-2.500 2.500z" fill="#bbb"/></svg></div>
<div class="a" style="left:788px;top:317px;width:164px;height:205px;background:#454545;border-top:1px solid #383838"></div>
<div class="a" style="left:943px;top:317px;width:9px;height:205px;background:#3d3d3d"></div>
<div class="a" style="left:935px;top:318px;width:8px;height:204px;background:#484848"></div>
<div class="a" style="left:935px;top:318px;width:8px;height:30px;background:linear-gradient(90deg,#8a8a8a,#b4b4b4 40%,#8e8e8e);border-radius:1px"></div>
<svg class="a" style="left:937px;top:331px" width="4" height="3"><path d="M0 0h4l-2 2.500z" fill="#222"/></svg>
<div class="a" style="left:788px;top:318px;width:147px;height:72px;background:#535353"></div>
<div class="a" style="left:810px;top:318px;width:1px;height:113px;background:#3e3e3e"></div>
<svg class="a" style="left:793.5px;top:329.0px" width="10" height="8" viewBox="0 0 10 8"><path d="M.3 4c2-4.700 7.400-4.700 9.400 0c-2 4.400-7.400 4.400-9.400 0z" fill="#a9a9a9" stroke="#b6b6b6" stroke-width=".5"/><circle cx="5" cy="3.700" r="1.900" fill="#454545"/><circle cx="4.400" cy="3.100" r=".6" fill="#aaa"/></svg>
<div class="a" style="left:813px;top:321px;width:25px;height:23px;background:repeating-conic-gradient(#fff 0 25%,#dcdcdc 0 50%) 0 0/6px 6px;border:1px solid #2a2a2a"></div>
<svg class="a" style="left:814.500px;top:321.500px" width="21" height="21" viewBox="-116 -116 232 232"><use href="#rays" fill="#d66654" stroke="#c85444" stroke-width="6"/><circle r="33" fill="#f4ac9c"/></svg>
<svg class="a" style="left:829px;top:335px" width="10" height="10" viewBox="0 0 10 10"><rect x="1" y="1" width="8" height="8" fill="#555"/><rect x="2.500" y="2.500" width="5" height="5" fill="none" stroke="#ddd" stroke-width=".9"/><g fill="#eee"><rect x="1.500" y="1.500" width="2" height="2"/><rect x="6.500" y="1.500" width="2" height="2"/><rect x="1.500" y="6.500" width="2" height="2"/><rect x="6.500" y="6.500" width="2" height="2"/></g></svg>
<span class="t" style="left:844px;top:329px;font-size:8px;color:#f0f0f0">Shape 1</span>
<span class="t" style="left:922px;top:326px;font-family:'Liberation Serif',serif;font-style:italic;font-size:11px;color:#d8d8d8">fx</span>
<svg class="a" style="left:824.0px;top:349.5px" width="10" height="8" viewBox="0 0 10 8"><path d="M.3 4c2-4.700 7.400-4.700 9.400 0c-2 4.400-7.400 4.400-9.400 0z" fill="#a9a9a9" stroke="#b6b6b6" stroke-width=".5"/><circle cx="5" cy="3.700" r="1.900" fill="#454545"/><circle cx="4.400" cy="3.100" r=".6" fill="#aaa"/></svg>
<span class="t" style="left:839px;top:349.500px;font-size:8px;color:#f0f0f0">Effects</span>
<svg class="a" style="left:837.0px;top:363.5px" width="10" height="8" viewBox="0 0 10 8"><path d="M.3 4c2-4.700 7.400-4.700 9.400 0c-2 4.400-7.400 4.400-9.400 0z" fill="#a9a9a9" stroke="#b6b6b6" stroke-width=".5"/><circle cx="5" cy="3.700" r="1.900" fill="#454545"/><circle cx="4.400" cy="3.100" r=".6" fill="#aaa"/></svg>
<span class="t" style="left:852px;top:363.500px;font-size:8px;color:#f0f0f0">Stroke</span>
<svg class="a" style="left:837.0px;top:378.0px" width="10" height="8" viewBox="0 0 10 8"><path d="M.3 4c2-4.700 7.400-4.700 9.400 0c-2 4.400-7.400 4.400-9.400 0z" fill="#a9a9a9" stroke="#b6b6b6" stroke-width=".5"/><circle cx="5" cy="3.700" r="1.900" fill="#454545"/><circle cx="4.400" cy="3.100" r=".6" fill="#aaa"/></svg>
<span class="t" style="left:852px;top:378px;font-size:8px;color:#f0f0f0">Drop Shadow</span>
<div class="a" style="left:788px;top:390px;width:147px;height:17px;background:#535353;border-top:1px solid #3e3e3e"></div>
<div class="a" style="left:792px;top:393px;width:13px;height:12px;background:#4a4a4a;border:1px solid #5e5e5e"></div>
<svg class="a" style="left:815px;top:395px" width="6" height="8"><path d="M0 0l5 4l-5 4z" fill="#eee"/></svg>
<svg class="a" style="left:823px;top:393px" width="12" height="10" viewBox="0 0 12 10"><path d="M.5 1.500h4l1 1.500h6v6.500h-11z" fill="#a4a4a4"/></svg>
<span class="t" style="left:844px;top:395px;font-size:8px;color:#f0f0f0">Group 1</span>
<div class="a" style="left:788px;top:407px;width:155px;height:24px;background:#4d5c75;border-top:1px solid #3e3e3e"></div>
<svg class="a" style="left:793.5px;top:415.0px" width="10" height="8" viewBox="0 0 10 8"><path d="M.3 4c2-4.700 7.400-4.700 9.400 0c-2 4.400-7.400 4.400-9.400 0z" fill="#a9a9a9" stroke="#b6b6b6" stroke-width=".5"/><circle cx="5" cy="3.700" r="1.900" fill="#454545"/><circle cx="4.400" cy="3.100" r=".6" fill="#aaa"/></svg>
<div class="a" style="left:812px;top:408px;width:27px;height:22px;border:1px solid #d8d8d8;background:#4d5c75"></div>
<div class="a" style="left:814px;top:410px;width:23px;height:18px;background:#fff;border:1px solid #222"></div>
<span class="t" style="left:845px;top:415px;font-size:8px;font-style:italic;color:#f0f0f0">Background</span>
<svg class="a" style="left:922px;top:413px" width="9" height="11" viewBox="0 0 9 11"><rect x="1" y="4.500" width="7" height="5.500" fill="none" stroke="#d0d0d0" stroke-width="1"/><path d="M2.500 4.500v-1.500a2 2 0 0 1 4 0v1.500" fill="none" stroke="#d0d0d0" stroke-width="1"/><rect x="4" y="6.500" width="1" height="2" fill="#d0d0d0"/></svg>
<svg class="a" style="left:787px;top:395px" width="11" height="15" viewBox="0 0 11 15"><path d="M3 .8c.8-.5 1.700 0 1.700 1v3.700l3.500.8c1.300.3 1.800 1 1.800 2.200l-.5 3.500c-.2 1.200-.8 2-2 2h-3c-1 0-1.500-.5-2-1.300l-2-3.700c-.5-1 .6-1.800 1.400-1l.6.800v-7c0-.5.200-.8.500-1z" fill="#fff" stroke="#111" stroke-width=".9"/></svg>
<div class="a" style="left:788px;top:522px;width:164px;height:15px;background:#535353;border-top:1px solid #383838"></div>
<svg class="a" style="left:801.5px;top:526.5px" width="11" height="7" viewBox="0 0 11 7"><rect x=".7" y="1.200" width="5.500" height="4.600" rx="2.300" fill="none" stroke="#7a7a7a" stroke-width="1.200"/><rect x="4.800" y="1.200" width="5.500" height="4.600" rx="2.300" fill="none" stroke="#7a7a7a" stroke-width="1.200"/></svg>
<span class="t" style="left:823px;top:523.500px;font-family:'Liberation Serif',serif;font-style:italic;font-size:11px;color:#8a8a8a">fx</span>
<svg class="a" style="left:842.5px;top:525.5px" width="11" height="9" viewBox="0 0 11 9"><rect x=".5" y=".5" width="10" height="8" fill="#c8c8c8"/><circle cx="5.500" cy="4.500" r="2.400" fill="#444"/></svg>
<svg class="a" style="left:862.5px;top:524.0px" width="12" height="12" viewBox="0 0 12 12"><circle cx="5" cy="5" r="4.300" fill="#d6d6d6"/><path d="M2 8.200a4.300 4.300 0 0 0 6.200-6.200z" fill="#555"/><path d="M9 9.500h3l-1.500 2z" fill="#ddd"/></svg>
<svg class="a" style="left:882.5px;top:525.5px" width="11" height="9" viewBox="0 0 11 9"><path d="M.5 1h4l1 1.500h5.500v6.500h-10.500z" fill="#b4b4b4"/></svg>
<svg class="a" style="left:903.0px;top:525.0px" width="10" height="10" viewBox="0 0 10 10"><path d="M1 .5h8.500v9h-5.500l-3-3z" fill="#c4c4c4"/><path d="M1 6.500h3v3z" fill="#444"/></svg>
<svg class="a" style="left:923.0px;top:524.5px" width="10" height="11" viewBox="0 0 10 11"><path d="M1.500 3h7l-.7 7h-5.600z" fill="none" stroke="#c4c4c4" stroke-width="1.100"/><path d="M.5 2.500h9M3.500 1h3" stroke="#c4c4c4" stroke-width="1.100"/><path d="M4 4.500v4M6 4.500v4" stroke="#c4c4c4" stroke-width=".9"/></svg>
<!-- bottom + right white edge -->
<div class="a" style="left:0;top:537px;width:956px;height:2px;background:#333"></div>
<div class="a" style="left:0;top:538.700px;width:956px;height:1.300px;background:#f4f4f4"></div>
<div id="tools" class="a"><div class="a" style="left:8px;top:3px;width:12px;height:3px;background:repeating-linear-gradient(90deg,#444 0 1px,#5a5a5a 1px 2px,transparent 2px 3px)"></div><svg class="a" style="left:4.5px;top:13.0px" width="18" height="16" viewBox="0 0 18 16"><path d="M3 2v10l7-5z" fill="#d2d2d2"/><path d="M13 7v6M10 10h6" stroke="#d2d2d2" stroke-width="1.300"/><path d="M13 6l-1.300 1.500h2.600zM13 14l-1.300-1.500h2.600zM9 10l1.500-1.300v2.600zM17 10l-1.500-1.300v2.600z" fill="#d2d2d2"/></svg><svg class="a" style="left:4.5px;top:32.0px" width="18" height="16" viewBox="0 0 18 16"><rect x="3.500" y="3" width="11" height="10" fill="none" stroke="#d2d2d2" stroke-width="1.300" stroke-dasharray="2 1.500"/></svg><svg class="a" style="left:21px;top:45px" width="3" height="3"><path d="M3 0v3h-3z" fill="#e0e0e0"/></svg><svg class="a" style="left:4.5px;top:52.0px" width="18" height="16" viewBox="0 0 18 16"><ellipse cx="9.500" cy="6.500" rx="6" ry="3.600" fill="none" stroke="#d2d2d2" stroke-width="1.400" transform="rotate(-12 9.500 6.500)"/><path d="M5.500 9.500c-1.500 1-1.500 2.500-.5 3.500c.6.600 .2 1.500-.5 2" fill="none" stroke="#d2d2d2" stroke-width="1.300"/></svg><svg class="a" style="left:21px;top:65px" width="3" height="3"><path d="M3 0v3h-3z" fill="#e0e0e0"/></svg><svg class="a" style="left:4.5px;top:71.5px" width="18" height="16" viewBox="0 0 18 16"><path d="M7 4a4.500 4.500 0 1 0 3 7" fill="none" stroke="#d2d2d2" stroke-width="1.200" stroke-dasharray="1.600 1.200"/><path d="M15.500 2.500l-5.500 6" stroke="#d2d2d2" stroke-width="1.800"/><path d="M10.500 8c-2-.5-3.500 1-3.500 3c-.5 1-1.500 1.500-2.500 1.500c2 1.500 6 1 7-2z" fill="#d2d2d2"/></svg><svg class="a" style="left:21px;top:84.5px" width="3" height="3"><path d="M3 0v3h-3z" fill="#e0e0e0"/></svg><svg class="a" style="left:4.5px;top:90.5px" width="18" height="17" viewBox="0 0 18 17"><path d="M5.500 1v11h11M1.500 4.500h11v11" fill="none" stroke="#d2d2d2" stroke-width="1.700"/><path d="M4 13.500l10-10" stroke="#d2d2d2" stroke-width=".9"/></svg><svg class="a" style="left:21px;top:104px" width="3" height="3"><path d="M3 0v3h-3z" fill="#e0e0e0"/></svg><svg class="a" style="left:4.5px;top:111.0px" width="18" height="16" viewBox="0 0 18 16"><path d="M3.500 14l.5-2.500l6-6l2 2l-6 6z" fill="none" stroke="#d2d2d2" stroke-width="1.100"/><path d="M9.500 4l1.500-.5l2.500-2.500c1.200-1 3 .8 2 2l-2.500 2.500l-.5 1.500l-1 .5l-2.500-2.500z" fill="#d2d2d2"/></svg><svg class="a" style="left:21px;top:124px" width="3" height="3"><path d="M3 0v3h-3z" fill="#e0e0e0"/></svg><div class="a" style="left:2px;top:130px;width:23px;height:1px;background:#424242;border-bottom:1px solid #5e5e5e;box-sizing:content-box"></div><svg class="a" style="left:4.5px;top:133.0px" width="18" height="16" viewBox="0 0 18 16"><g transform="rotate(-45 9.500 8)"><rect x="2" y="5" width="15" height="6" rx="2.800" fill="#d2d2d2"/><rect x="7" y="5.600" width="5" height="4.800" fill="#7a7a7a"/></g><path d="M3 4a5 5 0 0 1 4-2" fill="none" stroke="#d2d2d2" stroke-width="1" stroke-dasharray="1.500 1"/></svg><svg class="a" style="left:21px;top:146px" width="3" height="3"><path d="M3 0v3h-3z" fill="#e0e0e0"/></svg><svg class="a" style="left:4.5px;top:152.5px" width="18" height="16" viewBox="0 0 18 16"><path d="M16 1.500l-7.500 8" stroke="#d2d2d2" stroke-width="1.700"/><path d="M8.500 9l1.800 1.800c-1 2.500-4 3.500-7.300 3c1.500-.8 2-1.800 2.500-3c.5-1.300 1.600-2 3-1.800z" fill="#d2d2d2"/></svg><svg class="a" style="left:21px;top:165.5px" width="3" height="3"><path d="M3 0v3h-3z" fill="#e0e0e0"/></svg><svg class="a" style="left:4.5px;top:172.0px" width="18" height="16" viewBox="0 0 18 16"><path d="M7.500 2.500a2.300 2.300 0 0 1 4.600 0c0 1.500-1 2.500-1 4.500h3.400v3h-9.500v-3h3.500c0-2-1-3-1-4.500z" fill="#d2d2d2"/><rect x="4" y="11.500" width="11.500" height="2" fill="#d2d2d2"/></svg><svg class="a" style="left:21px;top:185px" width="3" height="3"><path d="M3 0v3h-3z" fill="#e0e0e0"/></svg><svg class="a" style="left:4.5px;top:191.5px" width="18" height="16" viewBox="0 0 18 16"><path d="M16 2l-6.500 7" stroke="#d2d2d2" stroke-width="1.700"/><path d="M9.500 8.500l1.600 1.600c-1 2.300-3.800 3.300-6.600 2.800c1.300-.7 1.800-1.600 2.200-2.700c.5-1.200 1.500-1.900 2.800-1.700z" fill="#d2d2d2"/><path d="M3 5a4 4 0 0 1 6.500-2.500" fill="none" stroke="#d2d2d2" stroke-width="1.200"/><path d="M2 2.500v3.500h3.500z" fill="#d2d2d2"/></svg><svg class="a" style="left:21px;top:204.5px" width="3" height="3"><path d="M3 0v3h-3z" fill="#e0e0e0"/></svg><svg class="a" style="left:4.5px;top:210.5px" width="18" height="16" viewBox="0 0 18 16"><path d="M2.500 10.500l7-7h6.500l-7 7z" fill="#d2d2d2"/><path d="M2.500 11.300h6.500l7-7v3l-7 7h-6.500z" fill="#9c9c9c"/></svg><svg class="a" style="left:21px;top:223.5px" width="3" height="3"><path d="M3 0v3h-3z" fill="#e0e0e0"/></svg><svg class="a" style="left:4.5px;top:229.5px" width="18" height="16" viewBox="0 0 18 16"><defs><linearGradient id="gt"><stop offset="0" stop-color="#f0f0f0"/><stop offset="1" stop-color="#555"/></linearGradient></defs><rect x="3.500" y="2.500" width="11" height="11" fill="url(#gt)" stroke="#d2d2d2" stroke-width="1"/></svg><svg class="a" style="left:21px;top:242.5px" width="3" height="3"><path d="M3 0v3h-3z" fill="#e0e0e0"/></svg><svg class="a" style="left:4.5px;top:249.5px" width="18" height="16" viewBox="0 0 18 16"><path d="M9 1.500c2 3.500 4.500 5.500 4.500 8.500a4.500 4.500 0 0 1-9 0c0-3 2.500-5 4.500-8.500z" fill="#d2d2d2"/></svg><svg class="a" style="left:21px;top:262.5px" width="3" height="3"><path d="M3 0v3h-3z" fill="#e0e0e0"/></svg><svg class="a" style="left:4.5px;top:269.0px" width="18" height="16" viewBox="0 0 18 16"><circle cx="7" cy="6" r="4" fill="#d2d2d2"/><path d="M10 9l5.500 5.500" stroke="#d2d2d2" stroke-width="2"/></svg><svg class="a" style="left:21px;top:282px" width="3" height="3"><path d="M3 0v3h-3z" fill="#e0e0e0"/></svg><div class="a" style="left:2px;top:287px;width:23px;height:1px;background:#424242;border-bottom:1px solid #5e5e5e;box-sizing:content-box"></div><svg class="a" style="left:4.5px;top:291.0px" width="18" height="16" viewBox="0 0 18 16"><path d="M3 15l1.500-6.500l5-4.500l4.500 4.500l-4.500 5z" fill="#d2d2d2"/><path d="M3.500 14.500l4.500-4.500" stroke="#555" stroke-width="1"/><circle cx="8.500" cy="9.500" r="1.100" fill="#555"/><path d="M10.500 3l1.500-1.500l4.500 4.500l-1.500 1.500z" fill="#d2d2d2"/></svg><svg class="a" style="left:21px;top:304px" width="3" height="3"><path d="M3 0v3h-3z" fill="#e0e0e0"/></svg><span class="t" style="left:7px;top:311.500px;font-family:'Liberation Serif',serif;font-size:17px;color:#d2d2d2">T</span><svg class="a" style="left:21px;top:324px" width="3" height="3"><path d="M3 0v3h-3z" fill="#e0e0e0"/></svg><svg class="a" style="left:4.5px;top:330.5px" width="18" height="16" viewBox="0 0 18 16"><path d="M5 1.500v12l3-2.800l2 4.300l2-1l-2-4.200h4z" fill="#1c1c1c" stroke="#d2d2d2" stroke-width=".9"/></svg><svg class="a" style="left:21px;top:343.5px" width="3" height="3"><path d="M3 0v3h-3z" fill="#e0e0e0"/></svg><div class="a" style="left:2px;top:347px;width:24px;height:20px;background:#3a3a3a;border:1px solid #303030;border-radius:2px"></div><svg class="a" style="left:4.5px;top:349.0px" width="18" height="17" viewBox="0 0 18 17"><path d="M5.500 2.500c1.500-1 3 .2 3.400 1.300c1.200-1.600 3.600-2.200 4.800-1.100c1.300 1.300-.3 3-1.800 3.600c1.600.2 3.400.8 3.200 2.500c-.3 1.700-2.500 1.400-3.800.7c.8 1.400 1.100 3.300-.5 3.800c-1.700.5-2.600-1.300-2.800-2.700c-.9 1.500-2.600 3-4.300 2.200c-1.700-1-.4-3 .8-4c-1.500.1-3.300-.3-3.300-1.900c.1-1.700 2.200-1.900 3.700-1.400c-.7-.9-.6-2.300.6-3z" fill="#8f8f8f" stroke="#d2d2d2" stroke-width="1"/></svg><svg class="a" style="left:21px;top:362.5px" width="3" height="3"><path d="M3 0v3h-3z" fill="#e0e0e0"/></svg><div class="a" style="left:2px;top:368px;width:23px;height:1px;background:#424242;border-bottom:1px solid #5e5e5e;box-sizing:content-box"></div><svg class="a" style="left:4.5px;top:371.0px" width="18" height="16" viewBox="0 0 18 16"><path d="M5.500 14c-1-2-3-4-3.500-5.500c-.3-1 1-1.500 1.700-.6l1.300 1.600v-6c0-1.200 1.600-1.200 1.700 0v-1.500c0-1.200 1.700-1.200 1.800 0v1c0-1.200 1.700-1.200 1.800 0v1.500c0-1.100 1.600-1.100 1.700 0v5.500c0 1.500-.5 3-1 4z" fill="#d2d2d2"/></svg><svg class="a" style="left:21px;top:384px" width="3" height="3"><path d="M3 0v3h-3z" fill="#e0e0e0"/></svg><svg class="a" style="left:4.5px;top:390.5px" width="18" height="16" viewBox="0 0 18 16"><circle cx="7.500" cy="6.500" r="4.300" fill="#909090" stroke="#d2d2d2" stroke-width="1.500"/><path d="M10.800 9.800l4.500 4.500" stroke="#d2d2d2" stroke-width="2.200"/></svg><svg class="a" style="left:3px;top:410px" width="22" height="9" viewBox="0 0 22 9"><rect x="3" y="3" width="5" height="5" fill="#fff" stroke="#222" stroke-width=".6"/><rect x=".5" y=".5" width="5" height="5" fill="#111" stroke="#ccc" stroke-width=".6"/><path d="M14 3.500a3.500 3.500 0 0 1 5 3" fill="none" stroke="#d2d2d2" stroke-width="1.100"/><path d="M12.500 3.500l2.500-2v4zM19 8.500l-2-2.500h4z" fill="#d2d2d2"/></svg><div class="a" style="left:10px;top:430px;width:14px;height:14px;background:#fff;border:1px solid #ddd"></div><div class="a" style="left:3.300px;top:422.500px;width:12.700px;height:12.700px;background:#000;border:1px solid #dcdcdc;box-shadow:0 0 0 .8px #333"></div><svg class="a" style="left:3.500px;top:447px" width="18" height="14.500" viewBox="0 0 18 15.500" preserveAspectRatio="none"><rect x="2.500" y="2.500" width="13" height="10" fill="none" stroke="#d2d2d2" stroke-width="1.200"/><ellipse cx="9" cy="7.500" rx="3.300" ry="2.800" fill="none" stroke="#d2d2d2" stroke-width="1" stroke-dasharray="1.500 1"/></svg><svg class="a" style="left:4px;top:469.500px" width="18" height="12" viewBox="0 0 18 12"><rect x="5.500" y="1.500" width="9" height="6.500" fill="#777" stroke="#d2d2d2" stroke-width="1.200"/><path d="M2.500 11v-5.500h3" fill="none" stroke="#d2d2d2" stroke-width="1.200"/><path d="M2.500 11h5" stroke="#d2d2d2" stroke-width="1.200"/></svg></div>

</div></body></html>
